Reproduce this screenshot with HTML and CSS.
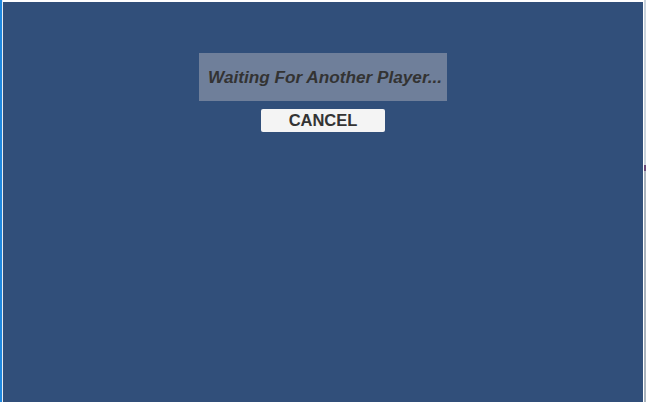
FILE: index.html
```html
<!DOCTYPE html>
<html>
<head>
<meta charset="utf-8">
<link rel="stylesheet" href="styles.css">
</head>
<body>
<div class="frame">
  <div class="left-edge"><div class="blue"></div><div class="white"></div></div>
  <div class="stage">
    <div class="top-line"></div>
    <div class="canvas">
      <div class="dialog">
        <div class="status">Waiting For Another Player...</div>
        <button class="cancel">CANCEL</button>
      </div>
    </div>
  </div>
  <div class="right-edge">
    <div class="white"></div>
    <div class="bar"><div class="upper"></div><div class="mark"></div><div class="lower"></div></div>
  </div>
</div>
</body>
</html>
```
FILE: styles.css
```css
html, body { margin: 0; padding: 0; }
body { width: 646px; height: 402px; overflow: hidden; background: #ffffff; font-family: "Liberation Sans", Arial, sans-serif; }
.frame { display: flex; width: 646px; height: 402px; }
.left-edge { display: flex; width: 3px; }
.left-edge .blue { width: 2px; background: #1e88e0; }
.left-edge .white { width: 1px; background: #e8eef4; }
.stage { flex: 1; display: flex; flex-direction: column; }
.top-line { height: 2px; background: #ffffff; }
.canvas { flex: 1; background: #314f7a; display: flex; justify-content: center; padding-top: 51px; }
.dialog { display: flex; flex-direction: column; align-items: center; }
.status { width: 248px; height: 48px; box-sizing: border-box; background: #6f7f9a; color: #333333; font-weight: bold; font-style: italic; font-size: 17.2px; display: flex; align-items: center; justify-content: center; padding: 1px 0 0 4px; }
.cancel { margin-top: 8px; width: 124px; height: 23px; border: none; border-radius: 2px; background: #f4f4f4; color: #333333; font-family: "Liberation Sans", Arial, sans-serif; font-weight: bold; font-size: 16.5px; padding: 0; line-height: 23px; }
.right-edge { display: flex; width: 3px; }
.right-edge .white { width: 1px; background: #ffffff; }
.right-edge .bar { width: 2px; display: flex; flex-direction: column; }
.right-edge .upper { height: 165px; background: #c9d3dc; }
.right-edge .mark { height: 6px; background: #6a4a78; }
.right-edge .lower { flex: 1; background: #a9b3bd; }
```
